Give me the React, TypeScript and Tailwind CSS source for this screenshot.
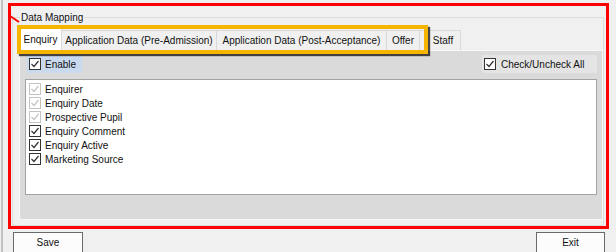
import React from "react";

function Box({ checked = true, disabled = false }: { checked?: boolean; disabled?: boolean }) {
  return (
    <span
      className={
        "inline-flex w-[12px] h-[12px] shrink-0 items-center justify-center bg-white border " +
        (disabled ? "border-[#c4c4c4]" : "border-[#333333]")
      }
    >
      {checked && (
        <svg width="10" height="10" viewBox="0 0 10 10">
          <polyline
            points="1.5,5 4,7.5 8.5,2"
            fill="none"
            stroke={disabled ? "#c4c4c4" : "#333333"}
            strokeWidth="1.2"
          />
        </svg>
      )}
    </span>
  );
}

const items: { label: string; disabled: boolean }[] = [
  { label: "Enquirer", disabled: true },
  { label: "Enquiry Date", disabled: true },
  { label: "Prospective Pupil", disabled: true },
  { label: "Enquiry Comment", disabled: false },
  { label: "Enquiry Active", disabled: false },
  { label: "Marketing Source", disabled: false },
];

export default function App() {
  return (
    <div className="relative w-[616px] h-[252px] overflow-hidden bg-[#f0f0f0] pl-[1px] font-['Liberation_Sans',Arial,sans-serif] text-[10px] leading-none text-[#111]">
      <div className="h-full border-l-2 border-[#c2c2c2] flex flex-col">
        {/* red annotation frame */}
        <div className="ml-[5px] mt-[3px] w-[601px] h-[228px] border-[3px] border-[#ff0000]">
          {/* group box */}
          <div className="relative ml-[1px] mt-[11px] w-[592px] h-[209px] border border-[#dcdcdc]">
            <span className="absolute left-[7px] top-[-5px] px-[1px] bg-[#f0f0f0]">Data Mapping</span>
            {/* tab strip */}
            <div className="ml-[6px] mt-[10px] flex items-end h-[22px]">
              <div className="h-[22px] w-[43px] bg-white border border-b-0 border-[#d9d9d9] flex items-center justify-center">
                Enquiry
              </div>
              <div className="h-[20px] w-[155px] bg-[#f0f0f0] border border-l-0 border-b-0 border-[#d9d9d9] flex items-center justify-center pt-[1px]">
                Application Data (Pre-Admission)
              </div>
              <div className="h-[20px] w-[170px] bg-[#f0f0f0] border border-l-0 border-b-0 border-[#d9d9d9] flex items-center justify-center pt-[1px]">
                Application Data (Post-Acceptance)
              </div>
              <div className="h-[20px] w-[33px] bg-[#f0f0f0] border border-l-0 border-b-0 border-[#d9d9d9] flex items-center justify-center pt-[1px]">
                Offer
              </div>
              <div className="h-[20px] w-[41px] bg-[#f0f0f0] border border-l-0 border-b-0 border-[#d9d9d9] flex items-center justify-center pl-[6px] pt-[1px]">
                Staff
              </div>
            </div>
            {/* tab page */}
            <div className="ml-[6px] w-[584px] h-[170px] bg-[#dadada] border border-[#f7f7f7]">
              <div className="mt-[4px] pl-[7px] pr-[5px] flex items-center justify-between h-[18px]">
                <div className="flex items-center h-[17px] w-[55px] bg-[#c9d9ee] pl-[2px] gap-[4px]">
                  <Box />
                  <span className="pt-[1px]">Enable</span>
                </div>
                <div className="flex items-center h-[18px] w-[115px] bg-[#e4e4e4] pl-[2px] gap-[5px]">
                  <Box />
                  <span className="pt-[1px]">Check/Uncheck All</span>
                </div>
              </div>
              <div className="mt-[6px] ml-[5px] w-[572px] h-[116px] bg-white border border-[#a3a3a3] pt-[2px] pl-[3px]">
                {items.map((it) => (
                  <div key={it.label} className="flex items-center h-[14px] gap-[4px]">
                    <Box disabled={it.disabled} />
                    <span className="pt-[1px]">{it.label}</span>
                  </div>
                ))}
              </div>
            </div>
          </div>
        </div>
        {/* buttons */}
        <div className="mt-[3px] ml-[10px] mr-[11px] flex justify-between">
          <button className="w-[70px] h-[22px] bg-[#fcfcfc] border border-[#6a6a6a] flex items-center justify-center text-[10px] text-[#111]">
            Save
          </button>
          <button className="w-[69px] h-[22px] bg-[#fcfcfc] border border-[#6a6a6a] flex items-center justify-center text-[10px] text-[#111]">
            Exit
          </button>
        </div>
      </div>

      {/* yellow highlight annotation over tabs */}
      <div className="absolute left-[17px] top-[25px] w-[411px] h-[29px] border-4 border-[#f6b500] shadow-[2px_2px_1px_rgba(0,0,0,0.7)]" />

      {/* red annotation stroke */}
      <svg className="absolute left-0 top-0" width="30" height="30" viewBox="0 0 30 30">
        <line x1="10" y1="16" x2="19" y2="22" stroke="#ff0000" strokeWidth="2" />
      </svg>
    </div>
  );
}
